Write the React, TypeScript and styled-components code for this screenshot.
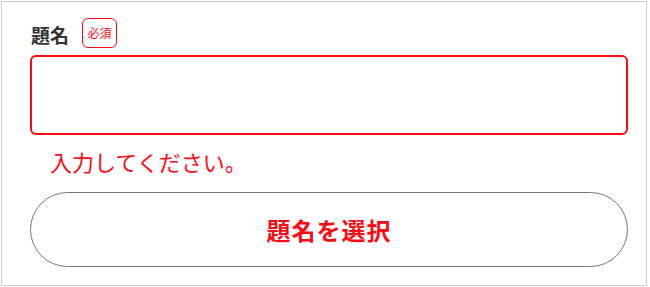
import React from "react";
import styled, { createGlobalStyle } from "styled-components";

const GlobalStyle = createGlobalStyle`
* {
    box-sizing: border-box;
    margin: 0;
    padding: 0;
}
body {
    background: #fff;
    font-family: "Noto Sans CJK JP", "Noto Sans", sans-serif;
}
`

const Frame = styled.div`
    margin: 1px;
    width: 646px;
    height: 285px;
    border: 1px solid #cfcfcf;
    padding: 15px 18px 0 28px;
    display: flex;
    flex-direction: column;
`

const LabelRow = styled.div`
    display: flex;
    align-items: center;
    gap: 13px;
    height: 31px;
`

const Label = styled.span`
    font-size: 19px;
    font-weight: bold;
    color: #333;
    line-height: 1;
    padding-left: 1px;
    margin-top: 4px;
`

const Badge = styled.span`
    width: 35px;
    height: 30px;
    border: 1.5px solid #ff0a14;
    border-radius: 6px;
    color: #ff0a14;
    font-size: 12px;
    display: flex;
    align-items: center;
    justify-content: center;
`

const Input = styled.input`
    margin-top: 7px;
    width: 100%;
    height: 80px;
    border: 2px solid #ff0a14;
    border-radius: 6px;
    outline: none;
    font-size: 18px;
    padding: 0 12px;
`

const Error = styled.p`
    margin-top: 12px;
    padding-left: 20px;
    font-size: 22px;
    line-height: 28px;
    color: #ff0a14;
`

const SelectButton = styled.button`
    margin-top: 17px;
    width: 100%;
    height: 75px;
    border: 1.5px solid #77767c;
    border-radius: 40px;
    background: #fff;
    color: #ff0a14;
    font-family: "Noto Sans CJK JP", "Noto Sans", sans-serif;
    font-size: 24px;
    font-weight: bold;
    letter-spacing: 1px;
    cursor: pointer;
`

export default function App() {
    return (
        <>
            <GlobalStyle />
            <Frame>
                <LabelRow>
                    <Label>題名</Label>
                    <Badge>必須</Badge>
                </LabelRow>
                <Input type="text" />
                <Error>入力してください。</Error>
                <SelectButton>題名を選択</SelectButton>
            </Frame>
        </>
    );
}
